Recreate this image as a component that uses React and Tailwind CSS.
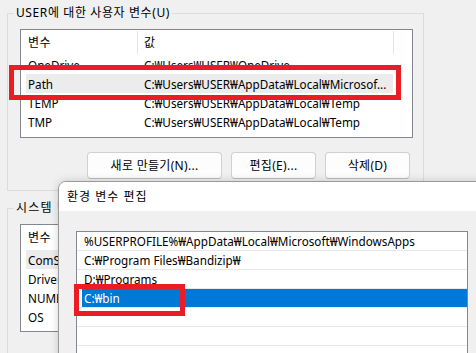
export default function App() {
  const userRows = [
    ["OneDrive", "C:₩Users₩USER₩OneDrive", false],
    ["Path", "C:₩Users₩USER₩AppData₩Local₩Microsof...", true],
    ["TEMP", "C:₩Users₩USER₩AppData₩Local₩Temp", false],
    ["TMP", "C:₩Users₩USER₩AppData₩Local₩Temp", false],
  ];
  const sysRows = [
    ["ComSpec", "", true],
    ["DriverData", "", false],
    ["NUMBER_OF_PROCESSORS", "", false],
    ["OS", "", false],
  ];
  const editRows = [
    ["%USERPROFILE%₩AppData₩Local₩Microsoft₩WindowsApps", false],
    ["C:₩Program Files₩Bandizip₩", false],
    ["D:₩Programs", false],
    ["C:₩bin", true],
    ["", false],
    ["", false],
    ["", false],
  ];

  const ListBox = ({ rows, h }) => (
    <div className={`w-[393px] ${h} border border-[#828790] bg-white flex flex-col overflow-hidden`}>
      <div className="h-[25px] flex shrink-0">
        <div className="w-[116px] pl-[7px] flex items-center tracking-[0.5px] text-[12px]">변수</div>
        <div className="w-px my-[1px] bg-[#e5e5e5]" />
        <div className="w-[255px] pl-[6px] flex items-center text-[12px]">값</div>
        <div className="w-px my-[1px] bg-[#e5e5e5]" />
      </div>
      {rows.map(([n, v, sel]) => (
        <div key={n} className="h-[19px] flex shrink-0">
          <div className={`ml-[5px] w-[367px] flex items-center whitespace-nowrap overflow-hidden ${sel ? "bg-[#ececec]" : ""}`}>
            <div className="w-[112px] pl-[2px] shrink-0 overflow-hidden">{n}</div>
            <div className="pl-[6px] whitespace-nowrap">{v}</div>
          </div>
        </div>
      ))}
    </div>
  );

  const btn =
    "h-[27px] rounded-[4px] border border-[#d0d0d0] border-b-[#bcbcbc] bg-[#fdfdfd] flex items-center justify-center text-[12px]";

  return (
    <div className="relative w-[476px] h-[353px] overflow-hidden bg-[#f0f0f0] text-[11.7px] leading-[16px] text-black font-['Noto_Sans','Noto_Sans_CJK_KR',sans-serif]">
      <div className="pl-[7px] pt-[5px] flex flex-col">
        <fieldset className="w-[417px] h-[186px] border border-[#dcdcdc] m-0 p-0">
          <legend className="ml-[6px] px-[2px] leading-[16px] text-[12px] tracking-[0.6px]">USER에 대한 사용자 변수(U)</legend>
          <div className="ml-[12px] mt-[8px] flex flex-col">
            <ListBox rows={userRows} h="h-[109px]" />
            <div className="mt-[14px] ml-[67px] flex gap-[9px]">
              <button className={`w-[135px] ${btn} tracking-[0.3px]`}>새로 만들기(N)...</button>
              <button className={`w-[85px] ${btn} tracking-[0.3px]`}>편집(E)...</button>
              <button className={`w-[85px] ${btn} tracking-[0.3px]`}>삭제(D)</button>
            </div>
          </div>
        </fieldset>
        <fieldset className="mt-[9px] w-[417px] h-[186px] border border-[#dcdcdc] m-0 p-0">
          <legend className="ml-[6px] px-[2px] leading-[16px] text-[12px] tracking-[1.2px]">시스템 변수(S)</legend>
          <div className="ml-[12px] mt-[8px] flex flex-col">
            <ListBox rows={sysRows} h="h-[108px]" />
          </div>
        </fieldset>
      </div>

      {/* edit dialog window */}
      <div className="absolute left-[58px] top-[181px] w-[430px] h-[190px] border border-[#9a9a9a] rounded-tl-[8px] overflow-hidden bg-[#f0f0f0] shadow-[0_0_8px_rgba(0,0,0,0.18)] flex flex-col">
        <div className="h-[29px] bg-white flex items-center pl-[8px] shrink-0 text-[12px] tracking-[1px]">환경 변수 편집</div>
        <div className="mt-[20px] ml-[17px] w-[392px] h-[140px] border border-[#828790] bg-white flex flex-col">
          {editRows.map(([t, sel], i) => (
            <div key={i} className="h-[19px] border-b border-[#e8e8e8] flex shrink-0">
              {sel ? (
                <div className="ml-[5px] flex-1 bg-[#0078d7] text-white pl-[2px] flex items-center">{t}</div>
              ) : (
                <div className="pl-[7px] flex items-center whitespace-nowrap">{t}</div>
              )}
            </div>
          ))}
        </div>
      </div>

      {/* red annotation boxes */}
      <div className="absolute left-[9px] top-[65px] w-[392px] h-[35px] border-[5px] border-[#ea1c24]" />
      <div className="absolute left-[74px] top-[284px] w-[111px] h-[32px] border-[5px] border-[#ea1c24]" />
    </div>
  );
}
